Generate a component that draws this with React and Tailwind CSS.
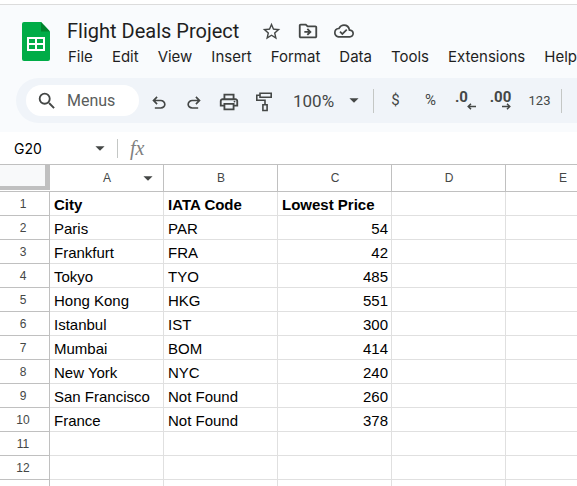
import React from "react";
import {
  MdStarBorder,
  MdOutlineDriveFileMove,
  MdOutlineCloudDone,
  MdSearch,
  MdOutlinePrint,
  MdArrowDropDown,
} from "react-icons/md";

const menus = ["File", "Edit", "View", "Insert", "Format", "Data", "Tools", "Extensions", "Help"];
const columns = ["A", "B", "C", "D", "E"];
const rows = [
  ["City", "IATA Code", "Lowest Price"],
  ["Paris", "PAR", 54],
  ["Frankfurt", "FRA", 42],
  ["Tokyo", "TYO", 485],
  ["Hong Kong", "HKG", 551],
  ["Istanbul", "IST", 300],
  ["Mumbai", "BOM", 414],
  ["New York", "NYC", 240],
  ["San Francisco", "Not Found", 260],
  ["France", "Not Found", 378],
  [],
  [],
];

function SheetsLogo() {
  return (
    <svg viewBox="0 0 28 39" className="h-[39px] w-7 shrink-0" aria-hidden="true">
      <path d="M2 0h17l9 9.500v27.500a2 2 0 0 1-2 2H2a2 2 0 0 1-2-2V2a2 2 0 0 1 2-2z" fill="#00ac47" />
      <path d="M19 0l9 9.500h-9z" fill="#00832d" />
      <path
        fillRule="evenodd"
        d="M5 15h18v14H5zM7 17v4h6v-4zM15 17v4h6v-4zM7 23v4h6v-4zM15 23v4h6v-4z"
        fill="#fff"
      />
    </svg>
  );
}

function UndoIcon({ className = "" }) {
  return (
    <svg viewBox="0 -960 960 960" className={`mt-1 size-5 ${className}`} fill="currentColor" aria-hidden="true">
      <path d="M280-200v-80h284q63 0 109.500-40T720-420q0-60-46.500-100T564-560H312l104 104-56 56-200-200 200-200 56 56-104 104h252q97 0 163.500 63T800-420q0 94-66.500 157T564-200H280Z" />
    </svg>
  );
}

function RollerIcon() {
  return (
    <svg viewBox="0 0 18 20" className="mt-0.5 h-5 w-[18px]" fill="none" stroke="currentColor" strokeWidth="1.600" aria-hidden="true">
      <path d="M5 1.300h11.200v3.900H5zM5 3.200H1.800v5H10v4.500M7.900 12.800h4.200v5.700H7.900z" />
    </svg>
  );
}

function ArrowIcon({ className = "" }) {
  return (
    <svg viewBox="0 0 9 7" className={`h-[7px] w-[9px] ${className}`} fill="none" stroke="currentColor" strokeWidth="1.500" aria-hidden="true">
      <path d="M9 3.500H1.500M4 0.700L1.200 3.500L4 6.300" />
    </svg>
  );
}

function Tool({ label, children }) {
  return (
    <button type="button" aria-label={label} className="flex h-8 w-[35px] shrink-0 items-center justify-center">
      {children}
    </button>
  );
}

export default function App() {
  return (
    <div className="flex h-screen flex-col overflow-hidden bg-white font-['Roboto',sans-serif] text-[#444746]">
      <header className="mt-1 shrink-0 border-t border-[#dcdcdc] bg-[#f9fbfd] pb-[9px]">
        <div className="flex h-[73px] items-start pt-[17px] pl-[22px]">
          <SheetsLogo />
          <div className="ml-[17px] -mt-[3px] shrink-0">
            <div className="flex h-6 items-center">
              <h1 className="whitespace-nowrap text-[20px] leading-6 text-[#1f1f1f]">Flight Deals Project</h1>
              <div className="ml-[22px] flex items-center gap-[15px]">
                <button type="button" aria-label="Star"><MdStarBorder className="size-[21px]" /></button>
                <button type="button" aria-label="Move"><MdOutlineDriveFileMove className="size-[22px]" /></button>
                <button type="button" aria-label="Document status"><MdOutlineCloudDone className="size-5" /></button>
              </div>
            </div>
            <nav className="mt-1 ml-px flex gap-[19px] font-['Inter',sans-serif] text-[15px] leading-5 text-[#1f1f1f]">
              {menus.map((m) => (
                <button type="button" key={m}>{m}</button>
              ))}
            </nav>
          </div>
        </div>
        <div className="ml-4 flex h-[45px] items-center overflow-hidden rounded-l-full bg-[#f0f4f9] pl-[10px]">
          <label className="mr-0.5 flex h-[31px] w-[113px] shrink-0 items-center rounded-full bg-white pl-[10px]">
            <MdSearch className="size-[22px] shrink-0" />
            <input
              aria-label="Menus"
              placeholder="Menus"
              className="ml-[9px] w-16 bg-transparent text-[16px] outline-none placeholder:text-[#5a5d5c]"
            />
          </label>
          <Tool label="Undo"><UndoIcon /></Tool>
          <Tool label="Redo"><UndoIcon className="-scale-x-100" /></Tool>
          <Tool label="Print"><MdOutlinePrint className="mt-0.5 size-[22px]" /></Tool>
          <Tool label="Paint format"><RollerIcon /></Tool>
          <div className="relative mr-1 h-6 w-[93px] shrink-0 border-r border-[#c4c7c5]">
            <select aria-label="Zoom" className="h-6 w-full appearance-none bg-transparent pl-3 text-[17px] outline-none">
              <option>100%</option>
            </select>
            <MdArrowDropDown className="pointer-events-none absolute top-0 right-2 size-[22px]" />
          </div>
          <Tool label="Currency"><span className="text-[15px]">$</span></Tool>
          <Tool label="Percent"><span className="text-[15px]">%</span></Tool>
          <Tool label="Decrease decimal places">
            <span className="flex flex-col items-end text-[15px] font-bold leading-3">
              <span className="pr-2">.0</span>
              <ArrowIcon />
            </span>
          </Tool>
          <Tool label="Increase decimal places">
            <span className="flex flex-col items-end text-[15px] font-bold leading-3">
              <span>.00</span>
              <ArrowIcon className="-scale-x-100" />
            </span>
          </Tool>
          <button type="button" className="h-6 w-11 shrink-0 border-r border-[#c4c7c5] text-[13px]">123</button>
        </div>
      </header>

      <div className="flex h-8 shrink-0 items-center bg-white">
        <input aria-label="Name box" defaultValue="G20" className="w-[89px] pl-[14px] font-['Inter',sans-serif] text-[14px] text-black outline-none" />
        <button type="button" aria-label="Named ranges"><MdArrowDropDown className="size-[22px]" /></button>
        <span className="ml-1.5 h-[19px] w-px bg-[#c4c7c5]" />
        <span className="ml-3 font-['Liberation_Serif',serif] text-[20px] italic leading-6 text-[#808080]">fx</span>
      </div>

      <table className="w-[620px] shrink-0 table-fixed border-separate border-spacing-0 border-t border-[#c0c0c0] font-['Liberation_Sans',Arial,sans-serif]">
        <colgroup>
          <col className="w-[50px]" />
          {columns.map((c) => (
            <col key={c} className="w-[114px]" />
          ))}
        </colgroup>
        <thead>
          <tr className="h-[27px]">
            <td className="border-b border-[#c0c0c0] p-0 align-top">
              <div className="h-[25px] border-r-5 border-b-4 border-[#c0c0c0] bg-[#f8f9fa]" />
            </td>
            {columns.map((c) => (
              <th key={c} scope="col" className="border-r border-b border-[#c0c0c0] p-0 pl-px text-[12px] font-normal leading-4">
                <div className="relative">
                  {c}
                  {c === "A" && <MdArrowDropDown className="absolute -top-[3px] right-1 size-[22px]" />}
                </div>
              </th>
            ))}
          </tr>
        </thead>
        <tbody>
          {rows.map((row, r) => (
            <tr key={r} className="h-6">
              <th scope="row" className="border-r border-b border-[#c0c0c0] p-0 pr-[3px] text-[12px] font-normal leading-4">
                {r + 1}
              </th>
              {columns.map((c, i) => (
                <td
                  key={c}
                  className={`whitespace-nowrap border-r border-b border-[#e0e0e0] pt-[3px] pr-[3px] pb-px pl-1 text-[15px] leading-[19px] text-black ${
                    r === 0 ? "font-bold" : ""
                  } ${typeof row[i] === "number" ? "text-right" : "text-left"}`}
                >
                  {row[i]}
                </td>
              ))}
            </tr>
          ))}
          <tr className="h-6">
            <td className="border-r border-[#c0c0c0]" />
            {columns.map((c) => (
              <td key={c} className="border-r border-[#e0e0e0]" />
            ))}
          </tr>
        </tbody>
      </table>
    </div>
  );
}
